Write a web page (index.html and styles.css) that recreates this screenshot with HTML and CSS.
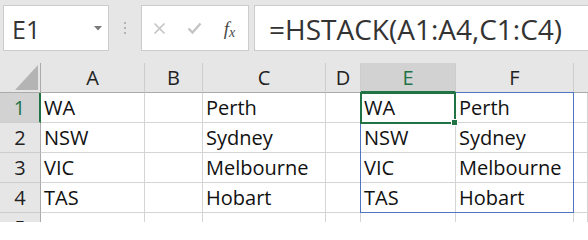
FILE: index.html
```html
<!DOCTYPE html>
<html>
<head>
<meta charset="utf-8">
<link rel="stylesheet" href="styles.css">
</head>
<body>
<div class="toolbar">
  <div class="namebox">
    <span class="name">E1</span>
    <svg class="dd" width="8" height="5" viewBox="0 0 8 5"><polygon points="0,0 8,0 4,4.5" fill="#7a7a7a"/></svg>
  </div>
  <div class="sep"><i></i><i></i><i></i></div>
  <div class="fxbtns">
    <span class="btn"><svg width="13" height="13" viewBox="0 0 13 13"><path d="M1.5 1.5 L11.5 11.5 M11.5 1.5 L1.5 11.5" stroke="#c4c4c4" stroke-width="1.6" fill="none"/></svg></span>
    <span class="btn"><svg width="15" height="12" viewBox="0 0 15 12"><path d="M1.5 6.5 L5.5 10.5 L13.5 1.5" stroke="#c4c4c4" stroke-width="2.4" fill="none"/></svg></span>
    <span class="btn fx"><span class="ff">f</span><span class="fxx">x</span></span>
  </div>
  <div class="formula">=HSTACK(A1:A4,C1:C4)</div>
</div>
<div class="sheet">
  <div class="hd corner"><svg width="23" height="25" viewBox="0 0 23 25"><polygon points="23,0 23,25 0,25" fill="#b4b4b4"/></svg></div>
  <div class="hd">A</div>
  <div class="hd">B</div>
  <div class="hd">C</div>
  <div class="hd">D</div>
  <div class="hd sel-col">E</div>
  <div class="hd">F</div>
  <div class="hd last"></div>

  <div class="rh sel-row">1</div>
  <div class="c">WA</div><div class="c"></div><div class="c">Perth</div><div class="c"></div><div class="c">WA</div><div class="c">Perth</div><div class="c"></div>

  <div class="rh">2</div>
  <div class="c">NSW</div><div class="c"></div><div class="c">Sydney</div><div class="c"></div><div class="c">NSW</div><div class="c">Sydney</div><div class="c"></div>

  <div class="rh">3</div>
  <div class="c">VIC</div><div class="c"></div><div class="c">Melbourne</div><div class="c"></div><div class="c">VIC</div><div class="c">Melbourne</div><div class="c"></div>

  <div class="rh">4</div>
  <div class="c">TAS</div><div class="c"></div><div class="c">Hobart</div><div class="c"></div><div class="c">TAS</div><div class="c">Hobart</div><div class="c"></div>

  <div class="rh">5</div>
  <div class="c"></div><div class="c"></div><div class="c"></div><div class="c"></div><div class="c"></div><div class="c"></div><div class="c"></div>

  <div class="spill"></div>
  <div class="active"></div>
  <div class="handle"></div>
</div>
</body>
</html>
```
FILE: styles.css
```css
html, body {
  margin: 0;
  padding: 0;
  background: #ffffff;
  overflow: hidden;
}
body {
  width: 588px;
  height: 222px;
  font-family: "Open Sans", "Liberation Sans", sans-serif;
}
.toolbar {
  display: flex;
  align-items: flex-start;
  height: 63px;
  box-sizing: border-box;
  padding: 5px 0 0 3px;
  background: #e6e6e6;
}
.namebox {
  width: 106px;
  height: 46px;
  box-sizing: border-box;
  background: #fff;
  border: 1px solid #cccccc;
  display: flex;
  align-items: center;
  padding: 2px 0 0 8px;
}
.name {
  font-size: 25px;
  color: #333;
  line-height: 30px;
}
.dd {
  margin-left: auto;
  margin-right: 6px;
  margin-top: -2px;
}
.sep {
  width: 32px;
  height: 46px;
  display: flex;
  flex-direction: column;
  align-items: center;
  justify-content: center;
  gap: 3px;
}
.sep i {
  width: 2px;
  height: 2px;
  background: #b3b3b3;
}
.fxbtns {
  width: 108px;
  height: 46px;
  box-sizing: border-box;
  background: #fff;
  border: 1px solid #cccccc;
  display: flex;
  align-items: center;
}
.btn {
  width: 35px;
  display: flex;
  justify-content: center;
  align-items: center;
}
.fx {
  font-family: "Liberation Serif", "DejaVu Serif", serif;
  font-style: italic;
  color: #4a4a4a;
  align-items: baseline;
  padding-top: 1px;
}
.ff {
  font-size: 19px;
}
.fxx {
  font-size: 14px;
  margin-left: 0;
  position: relative;
  top: 2px;
}
.formula {
  flex: 1;
  margin-left: 5px;
  height: 46px;
  box-sizing: border-box;
  background: #fff;
  border: 1px solid #cccccc;
  border-right: none;
  padding: 4px 0 0 14px;
  font-size: 28px;
  line-height: 38px;
  color: #333;
  white-space: nowrap;
}
.sheet {
  position: relative;
  display: grid;
  grid-template-columns: 41px 104px 58px 123px 35px 95px 118px 1fr;
  grid-template-rows: 30px 30px 30px 30px 30px 30px;
  font-size: 20px;
  color: #111;
}
.hd {
  background: #e6e6e6;
  border-right: 1px solid #cdcdcd;
  border-bottom: 1px solid #ababab;
  box-sizing: border-box;
  text-align: center;
  line-height: 30px;
  color: #222;
}
.hd.corner {
  border-right: 1px solid #ababab;
  display: flex;
  justify-content: flex-end;
  align-items: flex-end;
  padding: 0 2px 2px 0;
}
.hd.last {
  border-right: none;
}
.hd.sel-col {
  background: #d2d2d2;
  color: #217346;
  border-bottom: 2px solid #217346;
}
.rh {
  background: #e6e6e6;
  border-right: 1px solid #ababab;
  border-bottom: 1px solid #cdcdcd;
  box-sizing: border-box;
  text-align: center;
  line-height: 30px;
  color: #222;
}
.rh.sel-row {
  background: #d2d2d2;
  color: #217346;
  border-right: 2px solid #217346;
}
.c {
  border-right: 1px solid #d4d4d4;
  border-bottom: 1px solid #d4d4d4;
  box-sizing: border-box;
  padding-left: 3px;
  line-height: 30px;
  white-space: nowrap;
  overflow: visible;
  color: #111;
}
.spill {
  position: absolute;
  left: 360px;
  top: 29px;
  width: 214px;
  height: 121px;
  box-sizing: border-box;
  border: 1px solid #4f74c2;
  pointer-events: none;
}
.active {
  position: absolute;
  left: 360px;
  top: 29px;
  width: 96px;
  height: 32px;
  box-sizing: border-box;
  border: 2px solid #217346;
}
.handle {
  position: absolute;
  left: 452px;
  top: 57px;
  width: 5px;
  height: 5px;
  background: #217346;
  box-shadow: 0 0 0 1px #fff;
}
```
